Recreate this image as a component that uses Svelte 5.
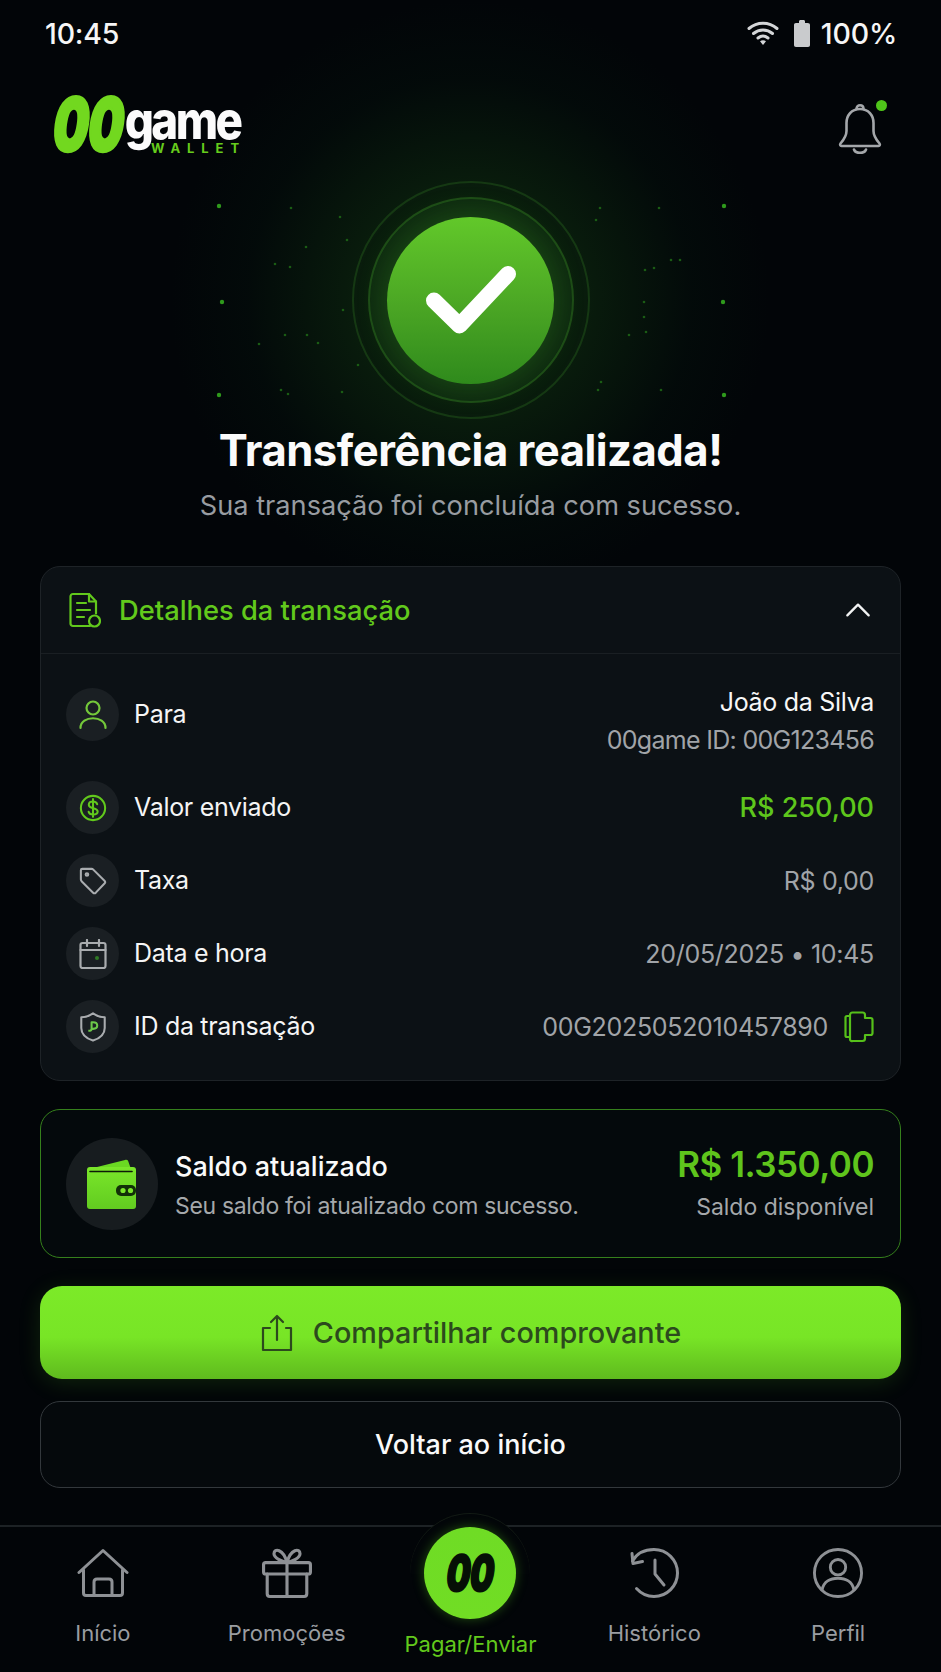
<script>
  const bigDots = [[18,36],[523,36],[21,132],[522,132],[18,225],[523,225]];
  const smallDots = [[90,38],[139,47],[89,97],[105,77],[74,94],[146,70],[142,140],[106,165],[84,165],[58,174],[117,173],[157,195],[80,220],[87,224],[141,222],[399,38],[458,38],[395,50],[470,90],[479,90],[444,100],[453,98],[443,132],[443,147],[428,165],[445,162],[460,220],[397,220],[400,212]];
</script>

<div class="app">
  <div class="glow"></div>

  <div class="status">
    <span class="clock">10:45</span>
    <div class="status-right">
      <svg class="wifi" viewBox="0 0 32 26" fill="none" stroke="#d4d6d8" stroke-width="3" stroke-linecap="round">
        <path d="M2 8.500C10 1.500 22 1.500 30 8.500"/>
        <path d="M6.500 13.500C12 8.800 20 8.800 25.500 13.500"/>
        <path d="M11 18C14 15.700 18 15.700 21 18"/>
        <path d="M16 25l-3-3.800c1.800-1.200 4.200-1.200 6 0z" fill="#d4d6d8" stroke="none"/>
      </svg>
      <svg class="battery" viewBox="0 0 18 28"><path d="M6 2.500c0-1 .8-1.500 1.500-1.500h3c.8 0 1.500.5 1.500 1.500V4h2.500C16.300 4 17 4.800 17 6v20c0 1.100-.7 2-2 2H3c-1.300 0-2-.9-2-2V6c0-1.200.7-2 2-2h3z" fill="#c9cbcd"/></svg>
      <span class="clock">100%</span>
    </div>
  </div>

  <header class="top">
    <div class="logo">
      <span class="logo-zero">00</span>
      <div class="logo-words">
        <span class="logo-game">game</span>
        <span class="logo-wallet">WALLET</span>
      </div>
    </div>
    <div class="bell">
      <svg viewBox="0 0 46 52" fill="none" stroke="#a4a7aa" stroke-width="2.600" stroke-linejoin="round" stroke-linecap="round">
        <path d="M23 7c-8.500 0-13.500 6.500-13.500 14v8c0 5-2.500 8.500-6 12.500-.8 1-.3 2.500 1 2.500h37c1.300 0 1.800-1.500 1-2.500-3.500-4-6-7.500-6-12.500v-8C36.500 13.500 31.500 7 23 7z"/>
        <path d="M19.500 7c0-5 7-5 7 0"/>
        <path d="M17 47.500c1.500 4.500 10.500 4.500 12 0"/>
      </svg>
      <span class="bell-dot"></span>
    </div>
  </header>

  <section class="hero">
    <div class="mark">
      <svg class="specks" viewBox="0 0 540 370">
        {#each bigDots as d}<circle cx={d[0]} cy={d[1]} r="2.200" fill="#2f9a1c"/>{/each}
        {#each smallDots as d}<circle cx={d[0]} cy={d[1]} r="1.300" fill="#1a5c14"/>{/each}
      </svg>
      <span class="ring ring-outer"></span>
      <span class="ring ring-inner"></span>
      <div class="disc">
        <svg viewBox="0 0 90 70" fill="none" stroke="#fff" stroke-width="16" stroke-linecap="round" stroke-linejoin="round"><path d="M8 35.500l25.500 25L82 9"/></svg>
      </div>
    </div>
    <h1>Transferência realizada!</h1>
    <p>Sua transação foi concluída com sucesso.</p>
  </section>

  <section class="card">
    <div class="card-head">
      <svg class="head-icon" viewBox="0 0 32 36" fill="none" stroke="#62c91c" stroke-width="2.200" stroke-linecap="round" stroke-linejoin="round">
        <path d="M21 34H4c-1.500 0-2.500-1-2.500-2.500v-27C1.500 3 2.500 2 4 2h16l7 7.500v12"/>
        <path d="M20 2v7.500h7"/>
        <path d="M8 11h9M8 18h13M8 25h7"/>
        <circle cx="25.500" cy="29" r="5.500"/>
      </svg>
      <span class="head-title">Detalhes da transação</span>
      <svg class="chev" viewBox="0 0 30 18" fill="none" stroke="#f2f3f3" stroke-width="2.600" stroke-linecap="round" stroke-linejoin="round"><path d="M3 15L15 3l12 12"/></svg>
    </div>
    <div class="rows">
      <div class="row row-first">
        <span class="ic">
          <svg viewBox="0 0 28 30" fill="none" stroke="#74c83a" stroke-width="2.200" stroke-linecap="round"><circle cx="14" cy="8" r="6.500"/><path d="M1.500 28c0-13 25-13 25 0"/></svg>
        </span>
        <span class="label">Para</span>
        <div class="val-stack">
          <span class="val-white">João da Silva</span>
          <span class="val val-tight">00game ID: 00G123456</span>
        </div>
      </div>
      <div class="row">
        <span class="ic">
          <svg viewBox="0 0 30 30" fill="none" stroke="#62c91c" stroke-width="2.200" stroke-linecap="round"><circle cx="15" cy="15" r="13"/><path d="M19.500 11c-.5-2-2.500-3-4.500-3-2.600 0-4.500 1.400-4.500 3.500 0 5 9.500 2.300 9.500 7.200 0 2.100-2 3.300-5 3.300-2.300 0-4.200-1-4.700-3M15 5.500v19"/></svg>
        </span>
        <span class="label">Valor enviado</span>
        <span class="val-green">R$ 250,00</span>
      </div>
      <div class="row">
        <span class="ic">
          <svg viewBox="0 0 30 30" fill="none" stroke="#a9acaf" stroke-width="2.200" stroke-linejoin="round"><path d="M2 3.500C2 2.500 2.800 2 3.500 2h10c.7 0 1.300.3 1.800.8l12 12c.9.900.9 2 0 2.900L18 27.500c-.9.900-2 .9-2.900 0L3 15.500c-.6-.6-1-1.300-1-2z"/><circle cx="8.500" cy="8" r="1.400"/></svg>
        </span>
        <span class="label">Taxa</span>
        <span class="val">R$ 0,00</span>
      </div>
      <div class="row">
        <span class="ic">
          <svg viewBox="0 0 28 30" fill="none" stroke="#a9acaf" stroke-width="2.200" stroke-linecap="round"><rect x="1.500" y="4" width="25" height="25" rx="2"/><path d="M1.500 11h25M8 1v6M20 1v6"/><circle cx="18" cy="19" r="2" fill="#2f7a25" stroke="none"/></svg>
        </span>
        <span class="label">Data e hora</span>
        <span class="val">20/05/2025 • 10:45</span>
      </div>
      <div class="row">
        <span class="ic">
          <svg viewBox="0 0 28 32" fill="none" stroke="#a9acaf" stroke-width="2.200" stroke-linejoin="round"><path d="M14 1.500c3.500 2.500 8 4 12.500 4.200V17c0 6.500-5 11-12.500 13.500C6.500 28 1.500 23.500 1.500 17V5.700C6 5.500 10.500 4 14 1.500z"/><path d="M12.500 11h1.500c3 0 4.500 1.500 4.500 3.500S17 18 14 18h-1.500zM12.500 18c0 1.500-1 2-3.500 2" stroke="#6cc84a"/></svg>
        </span>
        <span class="label">ID da transação</span>
        <div class="id-val">
          <span class="val">00G2025052010457890</span>
          <svg class="copy" viewBox="0 0 30 32" fill="none" stroke="#56c01a" stroke-width="2.200" stroke-linejoin="round"><path d="M6 5H3C2 5 1.500 5.700 1.500 6.500v18C1.500 25.500 2 26 3 26h3"/><path d="M6 4c0-1.500 1-2.500 2.500-2.500h10c1.500 0 2.500 1 2.500 2.500v3h5.500c1.200 0 2 .8 2 2v13c0 1.200-.8 2-2 2H21v3.500c0 1.500-1 2.500-2.500 2.500h-10C7 30.500 6 29.500 6 28z"/></svg>
        </div>
      </div>
    </div>
  </section>

  <section class="balance">
    <span class="wallet-ic">
      <svg viewBox="0 0 50 50">
        <defs><linearGradient id="wg" x1="0" y1="0" x2="0" y2="1"><stop offset="0" stop-color="#7ae62a"/><stop offset="1" stop-color="#62cc20"/></linearGradient></defs>
        <path d="M2 10L38 1c2-.5 3 0 3.500 2L44 10z" fill="#6ad822"/>
        <rect x="0" y="8" width="49" height="42" rx="3" fill="url(#wg)"/>
        <path d="M3 12.500h42" stroke="#0d1a08" stroke-width="1.600" stroke-linecap="round"/>
        <rect x="29" y="26" width="20" height="11" rx="5" fill="#123008"/>
        <circle cx="36" cy="31.500" r="2.600" fill="#7ae62a"/>
        <circle cx="43.500" cy="31.500" r="2.600" fill="#7ae62a"/>
      </svg>
    </span>
    <div class="bal-text">
      <span class="bal-title">Saldo atualizado</span>
      <span class="bal-sub bal-tight">Seu saldo foi atualizado com sucesso.</span>
    </div>
    <div class="bal-right">
      <span class="bal-amount">R$ 1.350,00</span>
      <span class="bal-sub">Saldo disponível</span>
    </div>
  </section>

  <button class="primary">
    <svg viewBox="0 0 32 38" fill="none" stroke="#2c4a1d" stroke-width="2.200" stroke-linecap="round" stroke-linejoin="round"><path d="M9 14H2v22h28V14h-5"/><path d="M16 26V2M10 8l6-6 6 6"/></svg>
    <span>Compartilhar comprovante</span>
  </button>
  <button class="secondary">Voltar ao início</button>

  <nav class="nav">
    <div class="nav-item">
      <svg viewBox="0 0 52 48" fill="none" stroke="#8e9195" stroke-width="3" stroke-linecap="round" stroke-linejoin="round"><path d="M2 23.500L26 1.500l24 22"/><path d="M6.500 21v23c0 1.500 1 2.500 2.500 2.500h34c1.500 0 2.500-1 2.500-2.500V21"/><path d="M17 46.500V33c0-2 1-3 3-3h12c2 0 3 1 3 3v13.500"/></svg>
      <span>Início</span>
    </div>
    <div class="nav-item">
      <svg viewBox="0 0 48 48" fill="none" stroke="#8e9195" stroke-width="3" stroke-linecap="round" stroke-linejoin="round"><rect x="1.500" y="14" width="45" height="11" rx="2"/><path d="M5 25v19c0 1.500 1 2.500 2.500 2.500h33c1.500 0 2.500-1 2.500-2.500V25M24 14v32.500"/><path d="M24 14C19 13 11.500 9.500 11.500 5.500c0-5.500 9-5 12.500 8.500zM24 14c5-1 12.500-4.500 12.500-8.500 0-5.500-9-5-12.500 8.500z"/></svg>
      <span>Promoções</span>
    </div>
    <div class="nav-item nav-pay">
      <span class="pay-halo"></span>
      <span class="pay-disc"><span class="pay-zero">00</span></span>
      <span class="pay-label">Pagar/Enviar</span>
    </div>
    <div class="nav-item">
      <svg viewBox="0 0 50 50" fill="none" stroke="#8e9195" stroke-width="3" stroke-linecap="round" stroke-linejoin="round"><path d="M3.500 13C7.500 6 15.500 1.500 25 1.500c13 0 23.500 10.500 23.500 23.500S38 48.500 25 48.500c-7 0-13-3-17.500-8"/><path d="M3 5.500l1 10 9.500-2"/><path d="M26 12v14l9 11"/></svg>
      <span>Histórico</span>
    </div>
    <div class="nav-item">
      <svg viewBox="0 0 52 52" fill="none" stroke="#8e9195" stroke-width="3" stroke-linecap="round"><circle cx="26" cy="26" r="24.500"/><circle cx="26" cy="20" r="8"/><path d="M9.500 43.500C11 35 18 31.500 26 31.500S41 35 42.500 43.500"/></svg>
      <span>Perfil</span>
    </div>
  </nav>
</div>

<style>
  :global(body) {
    margin: 0;
    background: #020508;
  }
  .app {
    position: relative;
    width: 941px;
    height: 1672px;
    overflow: hidden;
    background: #020508;
    font-family: Inter, "Liberation Sans", sans-serif;
    color: #fff;
  }
  .glow {
    position: absolute;
    left: 170px;
    top: 0;
    width: 600px;
    height: 600px;
    background: radial-gradient(circle closest-side, rgba(44, 130, 30, 0.36) 0%, rgba(30, 100, 26, 0.22) 42%, rgba(10, 60, 24, 0.09) 74%, transparent 100%);
  }
  .status {
    position: relative;
    height: 66px;
    padding: 0 44px 0 45px;
    display: flex;
    align-items: center;
    justify-content: space-between;
  }
  .clock {
    font-size: 28.500px;
    font-weight: 500;
    color: #f6f6f6;
    letter-spacing: -0.2px;
  }
  .status-right {
    display: flex;
    align-items: center;
  }
  .wifi {
    width: 32px;
    height: 26px;
  }
  .battery {
    width: 18px;
    height: 28px;
    margin: 0 10px 0 14px;
  }
  .top {
    position: relative;
    height: 115px;
    padding: 31px 57px 0 54px;
    box-sizing: border-box;
    display: flex;
    justify-content: space-between;
    align-items: flex-start;
  }
  .logo {
    display: flex;
    align-items: flex-start;
    height: 54px;
  }
  .logo-zero {
    display: block;
    width: 72px;
    font-size: 74px;
    font-weight: 900;
    line-height: 54px;
    color: #72d81f;
    letter-spacing: -1px;
    -webkit-text-stroke: 3px #72d81f;
    white-space: nowrap;
    transform-origin: left center;
    transform: skewX(-8deg) scaleX(0.68);
  }
  .logo-words {
    width: 114px;
    display: flex;
    flex-direction: column;
    align-items: flex-end;
  }
  .logo-game {
    font-size: 52px;
    font-weight: 800;
    line-height: 40px;
    margin-top: 4px;
    letter-spacing: -3px;
    color: #fbfbfb;
    transform-origin: right center;
    transform: scaleX(0.88);
  }
  .logo-wallet {
    font-size: 13px;
    font-weight: 700;
    line-height: 10px;
    margin-top: 2px;
    letter-spacing: 6.900px;
    margin-right: -6px;
    color: #66cc1c;
  }
  .bell {
    position: relative;
    width: 48px;
    height: 52px;
    margin-top: 5px;
  }
  .bell svg {
    width: 48px;
    height: 52px;
    display: block;
  }
  .bell-dot {
    position: absolute;
    right: -3px;
    top: -2px;
    width: 11px;
    height: 11px;
    border-radius: 50%;
    background: #4fc41a;
  }
  .hero {
    position: relative;
    display: flex;
    flex-direction: column;
    align-items: center;
  }
  .mark {
    position: relative;
    width: 238px;
    height: 238px;
    display: flex;
    align-items: center;
    justify-content: center;
  }
  .specks {
    position: absolute;
    left: -151px;
    top: -11px;
    width: 540px;
    height: 370px;
  }
  .ring {
    position: absolute;
    border-radius: 50%;
    box-sizing: border-box;
  }
  .ring-outer {
    inset: 0;
    border: 2px solid rgba(62, 150, 40, 0.24);
  }
  .ring-inner {
    inset: 16px;
    border: 2px solid rgba(62, 150, 40, 0.32);
    background: rgba(50, 130, 40, 0.12);
  }
  .disc {
    position: relative;
    width: 167px;
    height: 167px;
    border-radius: 50%;
    background: linear-gradient(180deg, #62c82a 0%, #4aa524 55%, #2f8a1c 100%);
    box-shadow: 0 0 30px rgba(70, 170, 40, 0.25);
    display: flex;
    align-items: center;
    justify-content: center;
  }
  .disc svg {
    width: 90px;
    height: 70px;
  }
  h1 {
    margin: 5px 0 0;
    font-size: 43.600px;
    font-weight: 700;
    line-height: 54px;
    letter-spacing: -0.5px;
    color: #fbfbfb;
  }
  .hero p {
    margin: 10px 0 0;
    font-size: 27.200px;
    line-height: 36px;
    color: #989ca1;
  }
  .card {
    position: relative;
    margin: 42px 40px 0;
    border: 1px solid #1e2327;
    border-radius: 20px;
    background: #0c1115;
  }
  .card-head {
    height: 86px;
    padding: 0 28px 0 28px;
    border-bottom: 1px solid #1a1f23;
    display: flex;
    align-items: center;
  }
  .head-icon {
    width: 32px;
    height: 36px;
    margin-right: 18px;
  }
  .head-title {
    flex: 1;
    font-size: 27.300px;
    font-weight: 500;
    color: #62c91c;
  }
  .chev {
    width: 28px;
    height: 16px;
  }
  .rows {
    padding: 34px 26px 27px 25px;
    display: flex;
    flex-direction: column;
    gap: 20px;
  }
  .row {
    height: 53px;
    display: flex;
    align-items: center;
    font-size: 25px;
    letter-spacing: -0.3px;
  }
  .row-first {
    height: 73px;
    align-items: flex-start;
  }
  .ic {
    width: 53px;
    height: 53px;
    flex: none;
    border-radius: 50%;
    background: #1a1f23;
    display: flex;
    align-items: center;
    justify-content: center;
    margin-right: 15px;
  }
  .ic svg {
    width: 28px;
    height: 30px;
  }
  .label {
    flex: 1;
    color: #f5f5f5;
    line-height: 53px;
  }
  .val {
    color: #a1a4a8;
  }
  .val-tight {
    letter-spacing: -0.7px;
  }
  .val-white {
    color: #f7f7f7;
  }
  .val-green {
    color: #5ec61c;
    font-weight: 500;
    font-size: 27px;
    letter-spacing: 0;
  }
  .val-stack {
    display: flex;
    flex-direction: column;
    align-items: flex-end;
    gap: 8px;
    line-height: 30px;
    margin-top: -1px;
  }
  .id-val {
    display: flex;
    align-items: center;
    gap: 16px;
  }
  .copy {
    width: 30px;
    height: 32px;
  }
  .balance {
    margin: 28px 40px 0;
    height: 149px;
    box-sizing: border-box;
    padding: 0 26px 0 25px;
    border: 1px solid #35801c;
    border-radius: 20px;
    background: #04090c;
    display: flex;
    align-items: center;
  }
  .wallet-ic {
    width: 92px;
    height: 92px;
    border-radius: 50%;
    background: #171c1f;
    display: flex;
    align-items: center;
    justify-content: center;
    margin-right: 17px;
  }
  .wallet-ic svg {
    width: 50px;
    height: 50px;
  }
  .bal-text {
    flex: 1;
    display: flex;
    flex-direction: column;
    gap: 7px;
    margin-top: 4px;
  }
  .bal-title {
    font-size: 27px;
    font-weight: 500;
    line-height: 34px;
    color: #fafafa;
  }
  .bal-sub {
    font-size: 23px;
    line-height: 30px;
    color: #a5a8ab;
  }
  .bal-tight {
    letter-spacing: -0.32px;
  }
  .bal-right {
    display: flex;
    flex-direction: column;
    align-items: flex-end;
    gap: 7px;
    margin-top: -2px;
  }
  .bal-amount {
    font-size: 35px;
    font-weight: 600;
    line-height: 42px;
    letter-spacing: -0.5px;
    color: #5fc41c;
  }
  button {
    display: flex;
    align-items: center;
    justify-content: center;
    font-family: inherit;
    box-sizing: border-box;
  }
  .primary {
    margin: 28px 40px 0;
    width: 861px;
    height: 93px;
    gap: 19px;
    border: none;
    border-radius: 22px;
    background: linear-gradient(180deg, #7cea28 0%, #78e526 55%, #5fba1e 100%);
    box-shadow: 0 4px 22px rgba(90, 200, 30, 0.16);
    font-size: 28.800px;
    font-weight: 500;
    color: #2c4a1d;
  }
  .primary svg {
    width: 34px;
    height: 38px;
  }
  .secondary {
    margin: 22px 40px 0;
    width: 861px;
    height: 87px;
    border: 1px solid #33383c;
    border-radius: 20px;
    background: #05090c;
    font-size: 27px;
    font-weight: 500;
    color: #fafafa;
  }
  .nav {
    position: relative;
    margin-top: 37px;
    height: 147px;
    box-sizing: border-box;
    padding: 0 11px;
    border-top: 2px solid #1d2225;
    display: grid;
    grid-template-columns: repeat(5, 1fr);
  }
  .nav-item {
    position: relative;
    display: flex;
    flex-direction: column;
    align-items: center;
    padding-top: 21px;
    font-size: 22px;
    color: #9a9da1;
  }
  .nav-item svg {
    height: 50px;
    width: 52px;
  }
  .nav-item span {
    line-height: 30px;
    margin-top: 20px;
  }
  .nav-pay {
    padding-top: 0;
  }
  .nav-item .pay-halo {
    position: absolute;
    top: -13px;
    left: 50%;
    margin: 0 0 0 -60px;
    width: 120px;
    height: 60px;
    border-radius: 60px 60px 0 0;
    background: #030609;
    box-shadow: 0 -1px 0 #121a14;
  }
  .nav-item .pay-disc {
    position: relative;
    margin: 0;
    width: 92px;
    height: 92px;
    border-radius: 50%;
    background: linear-gradient(180deg, #6fdc25, #71dd24);
    box-shadow: 0 0 12px rgba(90, 210, 30, 0.35);
    display: flex;
    align-items: center;
    justify-content: center;
  }
  .nav-item .pay-zero {
    margin: 0;
    display: block;
    font-size: 50px;
    font-weight: 900;
    line-height: 50px;
    letter-spacing: -1px;
    color: #061006;
    -webkit-text-stroke: 2px #061006;
    transform: skewX(-8deg) scaleX(0.68);
  }
  .nav-item .pay-label {
    position: relative;
    margin-top: 10px;
    color: #62c91c;
  }
</style>
